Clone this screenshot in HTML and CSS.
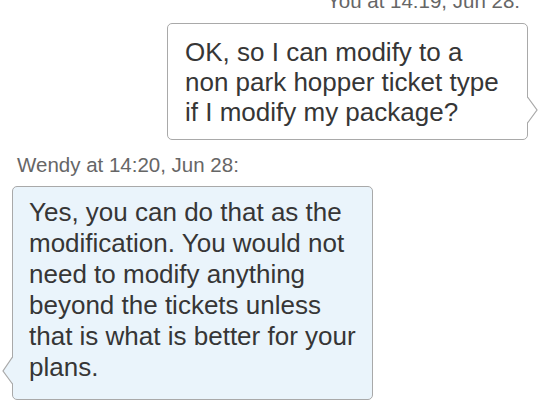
FILE: index.html
```html
<!DOCTYPE html>
<html>
<head>
<meta charset="utf-8">
<link rel="stylesheet" href="styles.css">
</head>
<body>
<div class="chat">
  <div class="meta meta-right">You at 14:19, Jun 28:</div>
  <div class="bubble bubble-out">
    OK, so I can modify to a non park hopper ticket type if I modify my package?
    <svg class="tail tail-right" width="12" height="28" viewBox="0 0 12 28">
      <polygon points="0,0 10,13 0,26" fill="#ffffff"/>
      <polyline points="0.5,0 10,13 0.5,26" fill="none" stroke="#a9a9a9" stroke-width="1.2"/>
    </svg>
  </div>
  <div class="meta meta-left">Wendy at 14:20, Jun 28:</div>
  <div class="bubble bubble-in">
    Yes, you can do that as the modification. You would not need to modify anything beyond the tickets unless that is what is better for your plans.
    <svg class="tail tail-left" width="12" height="28" viewBox="0 0 12 28">
      <polygon points="12,0 2,14 12,27" fill="#eaf4fb"/>
      <polyline points="11.5,0 2,14 11.5,27" fill="none" stroke="#a9a9a9" stroke-width="1.2"/>
    </svg>
  </div>
</div>
</body>
</html>
```

FILE: styles.css
```css
html, body {
  margin: 0;
  padding: 0;
  background: #ffffff;
}

body {
  font-family: "Liberation Sans", Arial, sans-serif;
  color: #363636;
  width: 538px;
  height: 412px;
  overflow: hidden;
}

.chat {
  display: flex;
  flex-direction: column;
}

.meta {
  font-size: 20.5px;
  line-height: 24px;
  color: #666666;
  white-space: nowrap;
}

.meta-right {
  text-align: right;
  padding-right: 18px;
  margin-top: -11px;
}

.meta-left {
  padding-left: 17px;
  margin-top: 13px;
}

.bubble {
  position: relative;
  box-sizing: border-box;
  width: 361px;
  font-size: 26px;
  border: 1px solid #a9a9a9;
  border-radius: 5px;
}

.bubble-out {
  align-self: flex-end;
  margin-right: 10px;
  margin-top: 10px;
  background: #ffffff;
  line-height: 30px;
  padding: 13px 16px 12px 17px;
}

.bubble-in {
  align-self: flex-start;
  margin-left: 12px;
  margin-top: 9px;
  background: #eaf4fb;
  line-height: 31px;
  padding: 10px 14px 16px 16px;
}

.tail {
  position: absolute;
  display: block;
}

.tail-right {
  right: -12px;
  top: 73px;
}

.tail-left {
  left: -12px;
  bottom: 14px;
}
```
